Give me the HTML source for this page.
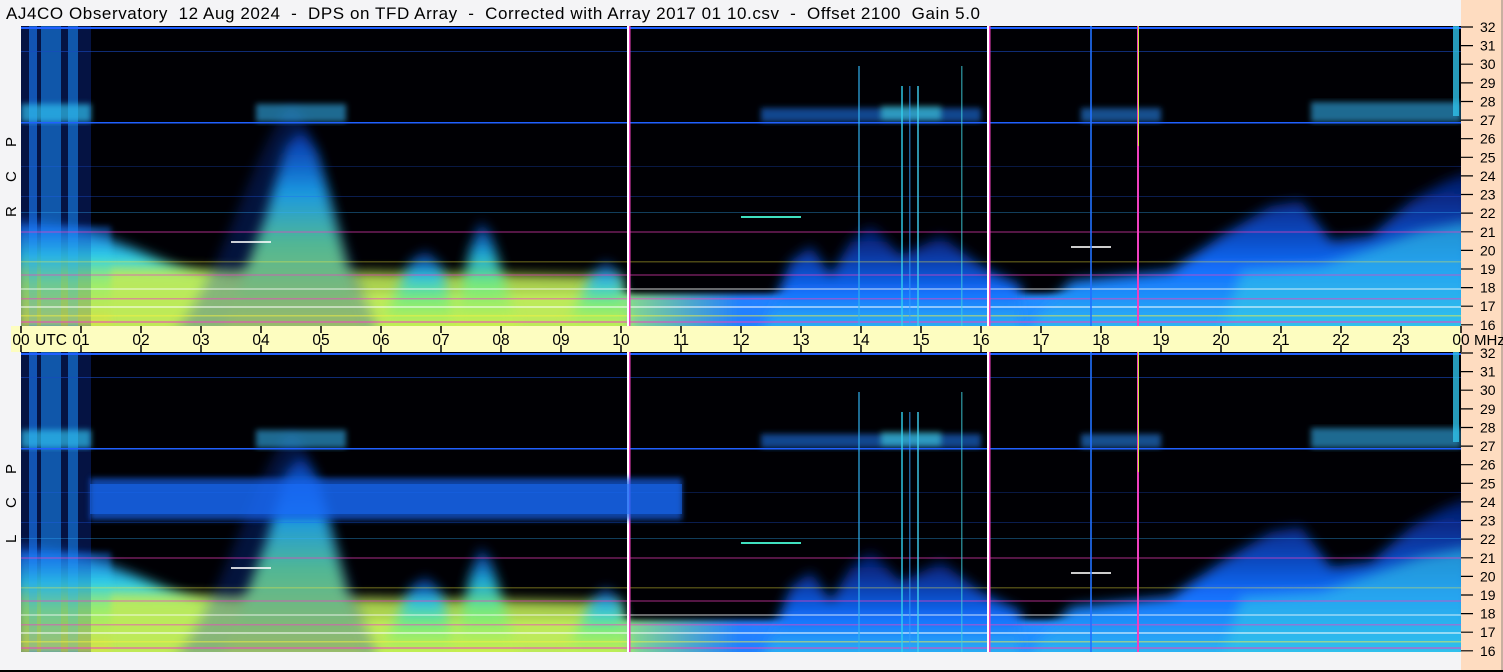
<!DOCTYPE html>
<html><head><meta charset="utf-8"><style>
html,body{margin:0;padding:0;background:#f4f4f6;}
svg{display:block;}
text{font-family:"Liberation Sans",sans-serif;}
</style></head><body>
<svg width="1503" height="672" viewBox="0 0 1503 672" xmlns="http://www.w3.org/2000/svg">
<defs>
<clipPath id="pc"><rect x="0" y="0" width="1440" height="300"/></clipPath>
<filter id="b6" x="-20%" y="-20%" width="140%" height="140%"><feGaussianBlur stdDeviation="6"/></filter>
<filter id="b3" x="-20%" y="-20%" width="140%" height="140%"><feGaussianBlur stdDeviation="3"/></filter>
<linearGradient id="cone" x1="0" y1="0" x2="0" y2="1">
<stop offset="0" stop-color="#1050ff" stop-opacity="0.6"/>
<stop offset="0.3" stop-color="#20c0f0"/>
<stop offset="0.55" stop-color="#70ec80"/>
<stop offset="1" stop-color="#e0f040"/>
</linearGradient>
<linearGradient id="blueCone" x1="0" y1="0" x2="0" y2="1">
<stop offset="0" stop-color="#0830c0" stop-opacity="0.5"/>
<stop offset="0.6" stop-color="#1470ff"/>
<stop offset="1" stop-color="#30c0f0"/>
</linearGradient>
<linearGradient id="leftBot" x1="0" y1="0" x2="0" y2="1">
<stop offset="0" stop-color="#1a70ff" stop-opacity="0.7"/>
<stop offset="0.3" stop-color="#30d0e8"/>
<stop offset="0.6" stop-color="#90f070"/>
<stop offset="1" stop-color="#e0e040"/>
</linearGradient>
<linearGradient id="bot" x1="0" y1="0" x2="1" y2="0">
<stop offset="0" stop-color="#c8f060"/>
<stop offset="0.4" stop-color="#a0f070"/>
<stop offset="0.5" stop-color="#2080ff"/>
<stop offset="0.75" stop-color="#2090ff"/>
<stop offset="1" stop-color="#40d0e0"/>
</linearGradient>
<g id="panel">
<g clip-path="url(#pc)">
<rect x="0" y="0" width="1440" height="300" fill="#000004"/>
<rect x="0" y="268" width="1440" height="40" fill="url(#bot)" filter="url(#b3)"/>
<path d="M-20 195 C60 190 120 230 180 250 L230 260 L230 320 L-20 320Z" fill="url(#leftBot)" filter="url(#b6)"/>
<path d="M-20 240 L600 250 L600 320 L-20 320Z" fill="#c0ea58" opacity="0.9" filter="url(#b6)"/>
<path d="M200 310 L245 190 L265 120 L280 105 L295 125 L315 200 L345 310Z" fill="url(#cone)" filter="url(#b6)"/>
<path d="M150 310 C200 260 230 120 270 80 C300 100 310 200 360 310Z" fill="#1040c0" opacity="0.3" filter="url(#b6)"/>
<path d="M355 310 L390 235 L405 225 L420 240 L440 310Z" fill="url(#cone)" filter="url(#b6)" opacity="0.9"/>
<path d="M430 310 L450 220 L460 195 L470 210 L500 310Z" fill="url(#cone)" filter="url(#b6)" opacity="0.9"/>
<path d="M540 310 L570 250 L585 235 L600 250 L610 310Z" fill="url(#cone)" filter="url(#b6)" opacity="0.9"/>
<path d="M740 310 L770 235 L790 220 L810 250 L830 215 L850 200 L880 230 L920 210 L960 240 L1000 260 L1000 310Z" fill="url(#blueCone)" filter="url(#b6)"/>
<path d="M1000 310 L1050 255 L1150 245 L1200 210 L1250 180 L1280 175 L1310 215 L1350 210 L1390 175 L1425 155 L1450 145 L1450 310Z" fill="url(#blueCone)" filter="url(#b6)"/>
<path d="M1200 310 L1220 245 L1300 240 L1400 205 L1450 195 L1450 310Z" fill="#30c8e8" opacity="0.6" filter="url(#b6)"/>
<rect x="0" y="0" width="70" height="300" fill="#0a2a90" opacity="0.45"/>
<rect x="8" y="0" width="8" height="300" fill="#1a80ff" opacity="0.6"/>
<rect x="20" y="0" width="20" height="300" fill="#1a90ff" opacity="0.55"/>
<rect x="47" y="0" width="10" height="300" fill="#1a90ff" opacity="0.55"/>
<rect x="0" y="200" width="90" height="100" fill="url(#leftBot)" opacity="0.6" filter="url(#b3)"/>
<g filter="url(#b3)">
<rect x="0" y="78" width="70" height="18" fill="#30c0f0" opacity="0.7"/>
<rect x="235" y="78" width="90" height="18" fill="#30b0f0" opacity="0.6"/>
<rect x="740" y="82" width="220" height="14" fill="#2080ff" opacity="0.55"/>
<rect x="860" y="80" width="60" height="14" fill="#40d0e0" opacity="0.6"/>
<rect x="1060" y="82" width="80" height="14" fill="#2a90ff" opacity="0.55"/>
<rect x="1290" y="76" width="150" height="20" fill="#30b0f0" opacity="0.6"/>
</g>
<rect x="0" y="96" width="1440" height="1.5" fill="#2060ff"/>
<rect x="0" y="1" width="1440" height="2" fill="#2060ff"/>
<rect x="0" y="25" width="1440" height="1" fill="#1848c0" opacity="0.6"/>
<g>
<rect x="0" y="205" width="1440" height="2" fill="#f040c0" opacity="0.35"/>
<rect x="0" y="235" width="1440" height="1.5" fill="#f8f040" opacity="0.3"/>
<rect x="0" y="248" width="1440" height="2" fill="#f040c0" opacity="0.35"/>
<rect x="0" y="262" width="1440" height="2" fill="#ffffff" opacity="0.4"/>
<rect x="0" y="272" width="1440" height="1.5" fill="#f040c0" opacity="0.5"/>
<rect x="0" y="280" width="1440" height="2" fill="#ffffff" opacity="0.5"/>
<rect x="0" y="289" width="1440" height="1.5" fill="#f8f040" opacity="0.5"/>
<rect x="0" y="295" width="1440" height="2" fill="#f040c0" opacity="0.5"/>
<rect x="0" y="186" width="1440" height="1" fill="#30b0ff" opacity="0.35"/>
<rect x="0" y="170" width="1440" height="1" fill="#2060ff" opacity="0.3"/>
<rect x="0" y="140" width="1440" height="1" fill="#2060ff" opacity="0.25"/>
<rect x="720" y="190" width="60" height="2" fill="#40e0c0"/>
<rect x="1050" y="220" width="40" height="2" fill="#ffffff" opacity="0.8"/>
<rect x="210" y="215" width="40" height="2" fill="#ffffff" opacity="0.8"/>
</g>
<rect x="837" y="40" width="2" height="260" fill="#30b0f0" opacity="0.6"/>
<rect x="880" y="60" width="2" height="240" fill="#30d0f0" opacity="0.7"/>
<rect x="888" y="60" width="1.5" height="240" fill="#30a0ff" opacity="0.6"/>
<rect x="896" y="60" width="2" height="240" fill="#40d0f0" opacity="0.7"/>
<rect x="940" y="40" width="1.5" height="260" fill="#40d0e0" opacity="0.6"/>
<rect x="1069" y="0" width="2" height="300" fill="#2070ff" opacity="0.8"/>
<rect x="1116" y="0" width="2" height="300" fill="#f040c0"/>
<rect x="1117" y="0" width="1" height="120" fill="#d0e040"/>
<rect x="1432" y="0" width="6" height="90" fill="#30c0e8" opacity="0.8"/>
<rect x="606" y="0" width="2.5" height="300" fill="#ffffff"/>
<rect x="608" y="0" width="1.5" height="300" fill="#f040c0"/>
<rect x="966" y="0" width="2.5" height="300" fill="#ffffff"/>
<rect x="968" y="0" width="1.5" height="300" fill="#f040c0"/>
</g>
</g>
</defs>

<rect x="0" y="0" width="1503" height="672" fill="#f4f4f6"/>
<text x="6" y="19" font-size="17" fill="#000" xml:space="preserve" textLength="974" lengthAdjust="spacing">AJ4CO Observatory  12 Aug 2024  -  DPS on TFD Array  -  Corrected with Array 2017 01 10.csv  -  Offset 2100  Gain 5.0</text>

<rect x="1461" y="0" width="40" height="672" fill="#fedcc0"/>
<rect x="1501" y="0" width="2" height="672" fill="#c8b0a0"/>
<rect x="11" y="326" width="1450" height="26" fill="#fdfdc0"/>

<use href="#panel" x="21" y="26"/>
<use href="#panel" x="21" y="352"/>
<rect x="90" y="478" width="592" height="42" fill="#1460e8" opacity="0.7" filter="url(#b3)"/>
<rect x="90" y="484" width="592" height="30" fill="#1a70ff" opacity="0.5"/>

<rect x="0" y="670" width="1503" height="2" fill="#000"/>

<g font-size="15" fill="#000">
<text transform="translate(16,147) rotate(-90)">P</text>
<text transform="translate(16,182) rotate(-90)">C</text>
<text transform="translate(16,217) rotate(-90)">R</text>
<text transform="translate(16,474) rotate(-90)">P</text>
<text transform="translate(16,508) rotate(-90)">C</text>
<text transform="translate(16,543) rotate(-90)">L</text>
</g>

<g stroke="#000" stroke-width="1.5">
<path d="M21 326v7M21 352v-7 M81 326v7M81 352v-7 M141 326v7M141 352v-7 M201 326v7M201 352v-7 M261 326v7M261 352v-7 M321 326v7M321 352v-7 M381 326v7M381 352v-7 M441 326v7M441 352v-7 M501 326v7M501 352v-7 M561 326v7M561 352v-7 M621 326v7M621 352v-7 M681 326v7M681 352v-7 M741 326v7M741 352v-7 M801 326v7M801 352v-7 M861 326v7M861 352v-7 M921 326v7M921 352v-7 M981 326v7M981 352v-7 M1041 326v7M1041 352v-7 M1101 326v7M1101 352v-7 M1161 326v7M1161 352v-7 M1221 326v7M1221 352v-7 M1281 326v7M1281 352v-7 M1341 326v7M1341 352v-7 M1401 326v7M1401 352v-7 M1461 326v7M1461 352v-7"/>
</g>
<g font-size="15.5" fill="#000" text-anchor="middle">
<text x="21" y="345">00</text><text x="51" y="345">UTC</text>
<text x="81" y="345">01</text><text x="141" y="345">02</text><text x="201" y="345">03</text><text x="261" y="345">04</text><text x="321" y="345">05</text><text x="381" y="345">06</text><text x="441" y="345">07</text><text x="501" y="345">08</text><text x="561" y="345">09</text><text x="621" y="345">10</text><text x="681" y="345">11</text><text x="741" y="345">12</text><text x="801" y="345">13</text><text x="861" y="345">14</text><text x="921" y="345">15</text><text x="981" y="345">16</text><text x="1041" y="345">17</text><text x="1101" y="345">18</text><text x="1161" y="345">19</text><text x="1221" y="345">20</text><text x="1281" y="345">21</text><text x="1341" y="345">22</text><text x="1401" y="345">23</text><text x="1461" y="345">00</text>
</g>
<text x="1474" y="345" font-size="15" fill="#000">MHz</text>

<g stroke="#000" stroke-width="1.2">
<path d="M1461 27h12M1461 45.6h12M1461 64.2h12M1461 82.9h12M1461 101.5h12M1461 120.1h12M1461 138.7h12M1461 157.3h12M1461 175.9h12M1461 194.5h12M1461 213.1h12M1461 231.8h12M1461 250.4h12M1461 269h12M1461 287.6h12M1461 306.2h12M1461 324.8h12"/>
<path transform="translate(0,326)" d="M1461 27h12M1461 45.6h12M1461 64.2h12M1461 82.9h12M1461 101.5h12M1461 120.1h12M1461 138.7h12M1461 157.3h12M1461 175.9h12M1461 194.5h12M1461 213.1h12M1461 231.8h12M1461 250.4h12M1461 269h12M1461 287.6h12M1461 306.2h12M1461 324.8h12"/>
</g>
<g font-size="14" fill="#000">
<text x="1480" y="32">32</text><text x="1480" y="50.6">31</text><text x="1480" y="69.2">30</text><text x="1480" y="87.9">29</text><text x="1480" y="106.5">28</text><text x="1480" y="125.1">27</text><text x="1480" y="143.7">26</text><text x="1480" y="162.3">25</text><text x="1480" y="180.9">24</text><text x="1480" y="199.5">23</text><text x="1480" y="218.1">22</text><text x="1480" y="236.8">21</text><text x="1480" y="255.4">20</text><text x="1480" y="274">19</text><text x="1480" y="292.6">18</text><text x="1480" y="311.2">17</text><text x="1480" y="329.8">16</text>
</g>
<g font-size="14" fill="#000" transform="translate(0,326)">
<text x="1480" y="32">32</text><text x="1480" y="50.6">31</text><text x="1480" y="69.2">30</text><text x="1480" y="87.9">29</text><text x="1480" y="106.5">28</text><text x="1480" y="125.1">27</text><text x="1480" y="143.7">26</text><text x="1480" y="162.3">25</text><text x="1480" y="180.9">24</text><text x="1480" y="199.5">23</text><text x="1480" y="218.1">22</text><text x="1480" y="236.8">21</text><text x="1480" y="255.4">20</text><text x="1480" y="274">19</text><text x="1480" y="292.6">18</text><text x="1480" y="311.2">17</text><text x="1480" y="329.8">16</text>
</g>
</svg>
</body></html>
